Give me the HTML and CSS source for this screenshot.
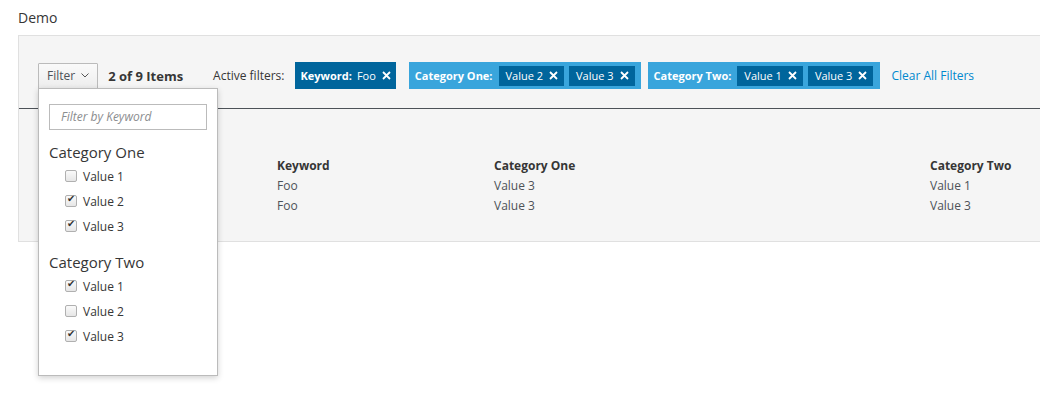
FILE: index.html
```html
<!DOCTYPE html>
<html lang="en">
<head>
    <meta charset="UTF-8">
    <title>Demo</title>
    <link rel="stylesheet" href="styles.css">
</head>
<body>
    <h1 class="title">Demo</h1>
    <div class="card">
        <div class="toolbar">
            <div class="filter">
                <button class="filter-btn" type="button">Filter
                    <svg width="8" height="5" viewBox="0 0 8 5"><path d="M0.5 0.5 L4 4 L7.5 0.5" fill="none" stroke="#555" stroke-width="1"/></svg>
                </button>
                <div class="menu">
                    <input class="keyword" type="text" placeholder="Filter by Keyword">
                    <div class="group">
                        <h4>Category One</h4>
                        <label class="opt"><input type="checkbox"> Value 1</label>
                        <label class="opt"><input type="checkbox" checked> Value 2</label>
                        <label class="opt"><input type="checkbox" checked> Value 3</label>
                    </div>
                    <div class="group">
                        <h4>Category Two</h4>
                        <label class="opt"><input type="checkbox" checked> Value 1</label>
                        <label class="opt"><input type="checkbox"> Value 2</label>
                        <label class="opt"><input type="checkbox" checked> Value 3</label>
                    </div>
                </div>
            </div>
            <span class="count">2 of 9 Items</span>
            <span class="active-label">Active filters:</span>
            <div class="chips">
                <span class="chip"><b>Keyword:</b> Foo
                    <svg class="x" width="9" height="9" viewBox="0 0 9 9"><path d="M1 1 L8 8 M8 1 L1 8" stroke="#fff" stroke-width="1.8"/></svg>
                </span>
                <span class="chip-group"><b>Category One:</b>
                    <span class="chip">Value 2 <svg class="x" width="9" height="9" viewBox="0 0 9 9"><path d="M1 1 L8 8 M8 1 L1 8" stroke="#fff" stroke-width="1.8"/></svg></span>
                    <span class="chip">Value 3 <svg class="x" width="9" height="9" viewBox="0 0 9 9"><path d="M1 1 L8 8 M8 1 L1 8" stroke="#fff" stroke-width="1.8"/></svg></span>
                </span>
                <span class="chip-group"><b>Category Two:</b>
                    <span class="chip">Value 1 <svg class="x" width="9" height="9" viewBox="0 0 9 9"><path d="M1 1 L8 8 M8 1 L1 8" stroke="#fff" stroke-width="1.8"/></svg></span>
                    <span class="chip">Value 3 <svg class="x" width="9" height="9" viewBox="0 0 9 9"><path d="M1 1 L8 8 M8 1 L1 8" stroke="#fff" stroke-width="1.8"/></svg></span>
                </span>
            </div>
            <a class="clear" href="#">Clear All Filters</a>
        </div>
        <div class="table">
            <div class="th">Keyword</div>
            <div class="th">Category One</div>
            <div class="th">Category Two</div>

            <div class="td">Foo</div>
            <div class="td">Value 3</div>
            <div class="td">Value 1</div>

            <div class="td">Foo</div>
            <div class="td">Value 3</div>
            <div class="td">Value 3</div>
        </div>
    </div>
</body>
</html>
```

FILE: styles.css
```css
html {
    height: 100%;
}

body {
    margin: 0;
    min-height: 100%;
    box-sizing: border-box;
    padding: 8px 0 0 18px;
    font-family: "Open Sans", sans-serif;
    color: #363636;
    background: #fff;
}

.title {
    margin: 0 0 7px;
    font-size: 14px;
    font-weight: normal;
    line-height: 20px;
    color: #363636;
}

.card {
    background: #f5f5f5;
    border: 1px solid #e0e0e0;
    border-right: none;
}

/* toolbar */
.toolbar {
    display: flex;
    align-items: center;
    padding: 26px 0 19px 19px;
    border-bottom: 1px solid #4d5258;
    font-size: 12px;
}

.filter {
    position: relative;
}

.filter-btn {
    display: flex;
    align-items: center;
    gap: 6px;
    height: 26px;
    padding: 0 8px;
    font-family: inherit;
    font-size: 12px;
    color: #4d5258;
    background: linear-gradient(#fafafa, #ededed);
    border: 1px solid #bbb;
    border-radius: 1px;
}

.count {
    margin-left: 10px;
    font-weight: bold;
    font-size: 13px;
}

.active-label {
    margin-left: 30px;
}

.chips {
    display: flex;
    align-items: center;
    margin-left: 10px;
}

.chip {
    display: inline-flex;
    align-items: center;
    height: 20px;
    padding: 0 6px 0 7px;
    background: #00659c;
    color: #fff;
    font-size: 11px;
}

.chips > .chip {
    height: 27px;
    padding: 0 5px 0 6px;
    margin-right: 13px;
}

.chips > .chip b {
    margin-right: 5px;
}

.chip .x {
    margin-left: 6px;
}

.chip-group {
    display: inline-flex;
    align-items: center;
    gap: 5px;
    height: 27px;
    padding: 0 6px;
    margin-right: 7px;
    background: #39a5dc;
    color: #fff;
    font-size: 11px;
}

.chip-group b {
    margin-right: 1px;
}

.chip-group + .chip-group {
    padding-right: 7px;
}

.clear {
    margin-left: 4px;
    color: #0088ce;
    text-decoration: none;
}

/* dropdown */
.menu {
    position: absolute;
    top: 25px;
    left: 0;
    z-index: 2;
    width: 180px;
    padding: 15px 10px 26px;
    box-sizing: border-box;
    background: #fff;
    border: 1px solid #bbb;
    box-shadow: 0 2px 6px rgba(0, 0, 0, 0.18);
}

.keyword {
    display: block;
    width: 100%;
    height: 26px;
    box-sizing: border-box;
    padding: 0 11px;
    border: 1px solid #bbb;
    font-family: inherit;
    font-size: 12px;
    outline: none;
}

.keyword::placeholder {
    color: #8b8d8f;
    font-style: italic;
}

.group h4 {
    margin: 12px 0 2px;
    font-size: 15px;
    font-weight: normal;
    line-height: 20px;
    color: #363636;
}

.group + .group h4 {
    margin-top: 13px;
}

.opt {
    display: flex;
    align-items: center;
    gap: 6px;
    height: 25px;
    padding-left: 16px;
    font-size: 12px;
    color: #363636;
}

.opt input {
    appearance: none;
    position: relative;
    width: 12px;
    height: 12px;
    margin: 0;
    border: 1px solid #b0b0b0;
    border-radius: 2px;
    background: linear-gradient(#fafafa, #e6e6e6);
}

.opt input:checked::after {
    content: "\2714";
    position: absolute;
    left: 1px;
    top: -3px;
    font-size: 10px;
    color: #333;
}

/* results */
.table {
    display: grid;
    grid-template-columns: 217px 436px 1fr;
    padding: 47px 0 25px 258px;
    font-size: 12px;
    line-height: 20px;
}

.th {
    font-weight: bold;
    color: #363636;
}

.td {
    color: #4d5258;
}
```
